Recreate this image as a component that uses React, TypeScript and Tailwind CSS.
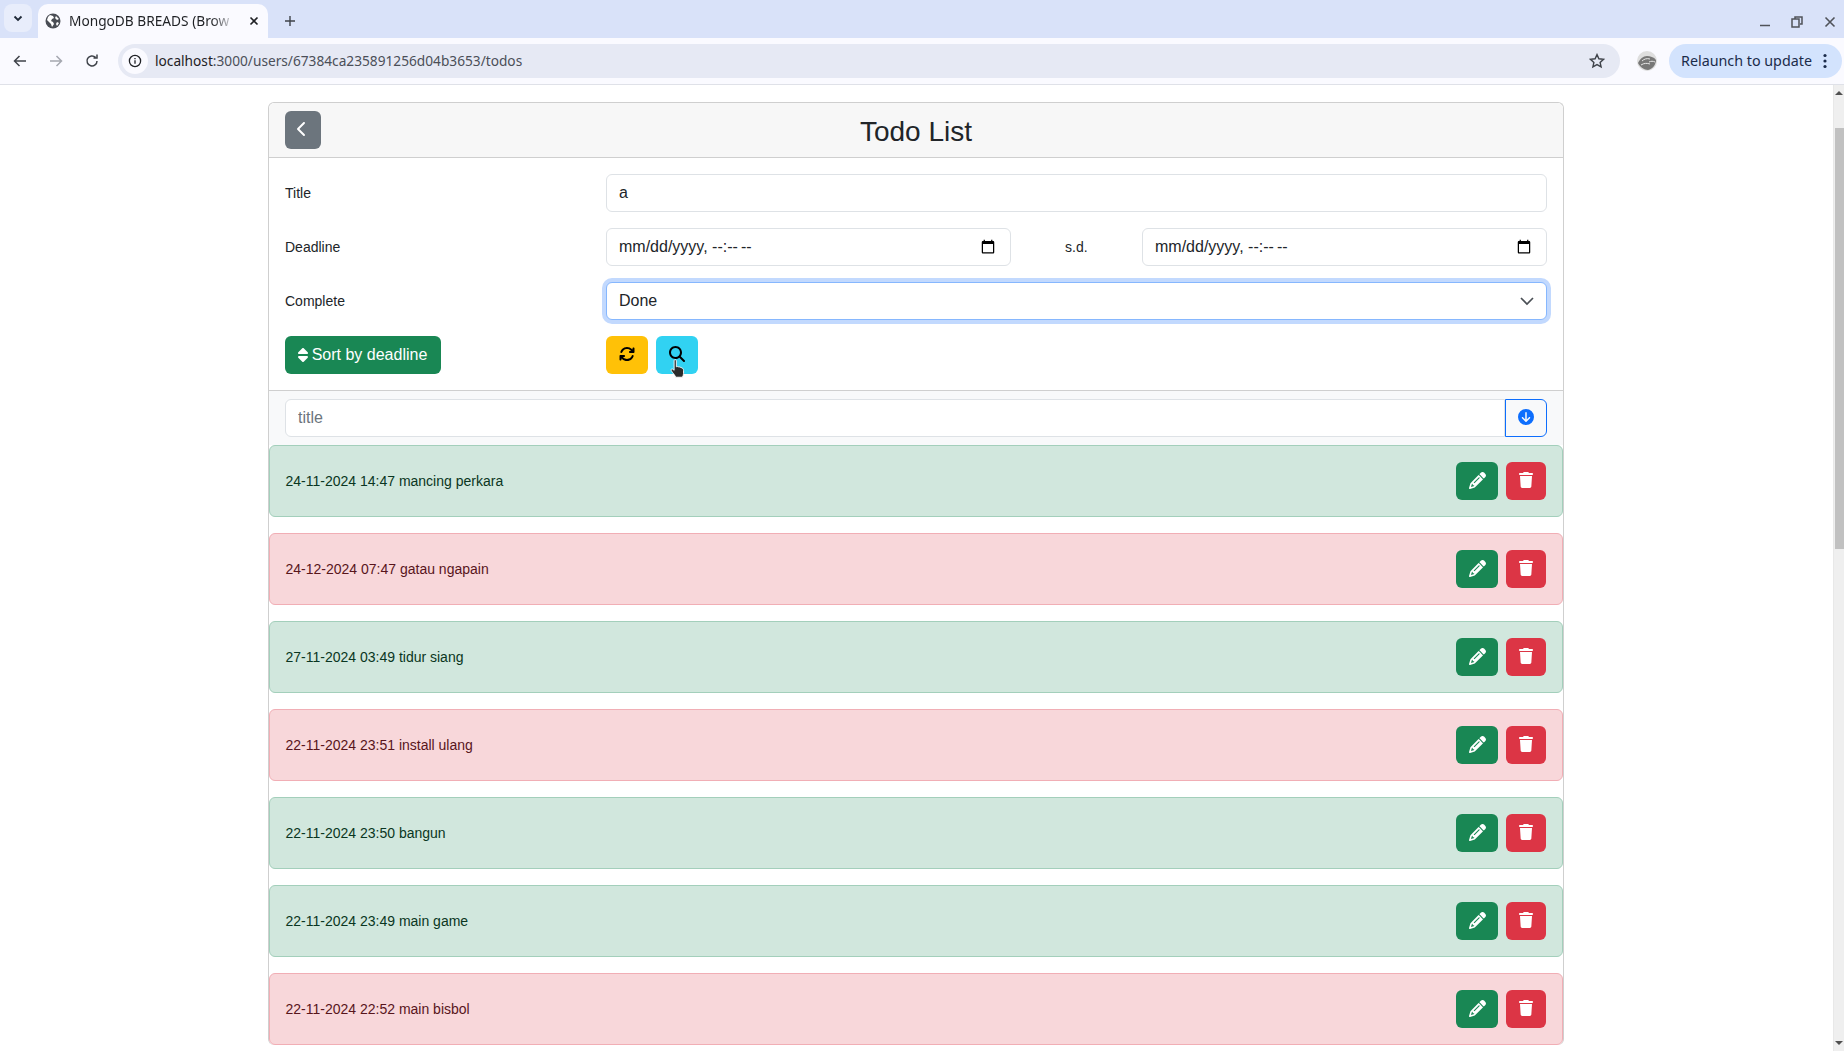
import { FaArrowsRotate, FaChevronLeft, FaCircleArrowDown, FaMagnifyingGlass, FaPencil, FaSort, FaTrash } from "react-icons/fa6";

const todos = [
  { text: "24-11-2024 14:47 mancing perkara", done: true },
  { text: "24-12-2024 07:47 gatau ngapain", done: false },
  { text: "27-11-2024 03:49 tidur siang", done: true },
  { text: "22-11-2024 23:51 install ulang", done: false },
  { text: "22-11-2024 23:50 bangun", done: true },
  { text: "22-11-2024 23:49 main game", done: true },
  { text: "22-11-2024 22:52 main bisbol", done: false },
];

function Favicon() {
  return (
    <svg width="16" height="16" viewBox="0 0 16 16">
      <circle cx="8" cy="8" r="7.5" fill="#4a4d55" />
      <path d="M5 2l3 1 1 2-2 1-1 2 2 1 1 2-2 3-1-3-2-2-2-2 1-3zM11 3l3 3-2 1-2-2zM12 9l2 1-2 3-1-2z" fill="#fff" />
    </svg>
  );
}

function BrowserChrome() {
  return (
    <div className="shrink-0" style={{ fontFamily: "'Noto Sans', sans-serif" }}>
      <div className="flex h-[38px] items-end bg-[#d9e2f9]">
        <div className="ml-[4px] mb-[6px] flex h-[28px] w-[28px] items-center justify-center rounded-lg bg-[#e8edfb]">
          <svg width="12" height="12" viewBox="0 0 12 12" fill="none" stroke="#1f2937" strokeWidth="1.8"><path d="M2.5 4.5 6 8l3.500-3.500" /></svg>
        </div>
        <div className="ml-[6px] flex h-[34px] w-[230px] items-center rounded-t-[10px] bg-[#fafaff] pl-[7px]">
          <Favicon />
          <span className="ml-[8px] w-[170px] overflow-hidden whitespace-nowrap text-[13.7px] text-[#1f2125] [mask-image:linear-gradient(to_right,black_84%,transparent_98%)]">MongoDB BREADS (Brow</span>
          <svg className="ml-[10px]" width="10" height="10" viewBox="0 0 10 10" stroke="#1f2125" strokeWidth="1.6"><path d="M1.5 1.5l7 7M8.500 1.500l-7 7" /></svg>
        </div>
        <svg className="mb-[11px] ml-[16px]" width="12" height="12" viewBox="0 0 12 12" stroke="#3f434a" strokeWidth="1.4"><path d="M6 1v10M1 6h10" /></svg>
        <div className="ml-auto mb-[10px] flex items-center">
          <svg width="12" height="12" viewBox="0 0 12 12" stroke="#50535a" strokeWidth="1.5"><path d="M1 9.500h10" /></svg>
          <svg className="ml-[20px]" width="12" height="12" viewBox="0 0 12 12" fill="none" stroke="#50535a" strokeWidth="1.5"><path d="M4 3V1h7v7H9M1 3h7v8H1z" /></svg>
          <svg className="ml-[21px] mr-[8px]" width="12" height="12" viewBox="0 0 12 12" stroke="#50535a" strokeWidth="1.6"><path d="M1.500 1.500l9 9M10.500 1.500l-9 9" /></svg>
        </div>
      </div>
      <div className="flex h-[47px] items-center border-b border-[#dfe1e8] bg-[#fafaff]">
        <svg className="ml-[12px]" width="16" height="16" viewBox="0 0 16 16" fill="none" stroke="#3f434a" strokeWidth="1.5"><path d="M14 8H2.500M7.500 3l-5 5 5 5" /></svg>
        <svg className="ml-[20px]" width="16" height="16" viewBox="0 0 16 16" fill="none" stroke="#a5a8b0" strokeWidth="1.5"><path d="M2 8h11.500M8.500 3l5 5-5 5" /></svg>
        <svg className="ml-[20px]" width="16" height="16" viewBox="0 0 16 16" fill="none" stroke="#3f434a" strokeWidth="1.5"><path d="M13 8a5 5 0 1 1-1.500-3.600M13 1.500v3.500H9.500" /></svg>
        <div className="ml-[18px] flex h-[34px] w-[1502px] items-center rounded-full bg-[#e6e9f4] pl-[4px]">
          <div className="flex h-[26px] w-[26px] items-center justify-center rounded-full bg-[#fafaff]">
            <svg width="14" height="14" viewBox="0 0 14 14" fill="none" stroke="#1f2125" strokeWidth="1.3"><circle cx="7" cy="7" r="5.600" /><path d="M7 6.200v3.600M7 4v1.200" /></svg>
          </div>
          <span className="ml-[7px] text-[13.7px] text-[#1f2125]">localhost<span className="text-[#4b4f58]">:3000/users/67384ca235891256d04b3653/todos</span></span>
          <svg className="ml-auto mr-[15px]" width="16" height="16" viewBox="0 0 16 16" fill="none" stroke="#3f434a" strokeWidth="1.4"><path d="M8 1.600l1.900 4.200 4.600.5-3.400 3.100 1 4.500L8 11.600l-4.100 2.300 1-4.500-3.400-3.100 4.600-.5z" /></svg>
        </div>
        <svg className="ml-[17px]" width="20" height="20" viewBox="0 0 20 20">
          <circle cx="10" cy="10" r="10" fill="#dedede" />
          <path d="M1 12c2-4 5-7 9-7 3 0 7 1 9 4 0 4-3 9-8 10-4 0-8-3-10-7z" fill="#777" />
          <path d="M5 10c2-2 5-3 8-2M4 14c3-2 6-2 9-1M12 11c2-1 4-1 6 0" stroke="#e6e6e6" fill="none" />
        </svg>
        <div className="ml-[12px] flex h-[34px] w-[173px] items-center rounded-full bg-[#d3e3fd] pl-[12px] text-[14.3px] text-[#1b2b4a]">
          Relaunch to update
          <svg className="ml-[11px]" width="4" height="16" viewBox="0 0 4 16" fill="#1b2b4a"><circle cx="2" cy="2.500" r="1.600" /><circle cx="2" cy="8" r="1.600" /><circle cx="2" cy="13.500" r="1.600" /></svg>
        </div>
      </div>
    </div>
  );
}

function Scrollbar() {
  return (
    <div className="flex w-[11px] shrink-0 flex-col border-l border-[#e8e8e8] bg-[#efefef]">
      <div className="flex h-[43px] shrink-0 justify-center pt-[6px]">
        <div className="h-0 w-0 border-x-[4px] border-b-[4px] border-x-transparent border-b-[#505050]" />
      </div>
      <div className="ml-[1px] h-[421px] shrink-0 bg-[#c1c1c1]" />
      <div className="mt-auto flex justify-center pb-[6px]">
        <div className="h-0 w-0 border-x-[4px] border-t-[4px] border-x-transparent border-t-[#505050]" />
      </div>
    </div>
  );
}

function TodoRow({ text, done }: { text: string; done: boolean }) {
  return (
    <div className={`flex h-[72px] shrink-0 items-center justify-between rounded-[6px] border pl-[15.5px] pr-[16px] text-[14px] ${done ? "border-[#a3cfbb] bg-[#d1e7dd] text-[#0a3622]" : "border-[#f1aeb5] bg-[#f8d7da] text-[#58151c]"}`}>
      <span>{text}</span>
      <div className="flex gap-[8px]">
        <button className="flex h-[38px] w-[42px] items-center justify-center rounded-[6px] bg-[#198754] pb-[2px] text-white"><FaPencil size={17} /></button>
        <button className="flex h-[38px] w-[40px] items-center justify-center rounded-[6px] bg-[#dc3545] pb-[3px] text-white"><FaTrash size={16} /></button>
      </div>
    </div>
  );
}

const inputClass = "h-[38px] rounded-[6px] border border-[#dee2e6] bg-white px-[12px] text-[16px] text-[#212529] outline-none";
// bootstrap strips the padding chrome puts on the date fields
const dateClass = "[&::-webkit-datetime-edit-fields-wrapper]:p-0 [&::-webkit-datetime-edit-text]:p-0 [&::-webkit-datetime-edit-month-field]:p-0 [&::-webkit-datetime-edit-day-field]:p-0 [&::-webkit-datetime-edit-year-field]:p-0 [&::-webkit-datetime-edit-hour-field]:p-0 [&::-webkit-datetime-edit-minute-field]:p-0 [&::-webkit-datetime-edit-ampm-field]:p-0";

export default function App() {
  return (
    <div className="flex h-[1051px] flex-col overflow-hidden bg-white" style={{ fontFamily: "'Liberation Sans', sans-serif" }}>
      <BrowserChrome />
      <div className="flex min-h-0 flex-1">
        <div className="min-w-0 flex-1 overflow-hidden pt-[17px] pl-[268px] pr-[269px]">
          <div className="rounded-[6px] border border-b-0 border-[#cfcfcf] text-[#212529]">
            <div className="relative flex h-[55px] items-center justify-center rounded-t-[6px] border-b border-[#cfcfcf] bg-[#f7f7f7] pt-[4px]">
              <button className="absolute left-[16px] top-[8px] flex h-[38px] w-[36px] items-center justify-center rounded-[6px] bg-[#6c757d] pb-[2px] pr-[2px] text-white"><FaChevronLeft size={16} /></button>
              <h1 className="text-[28px] leading-[34px]">Todo List</h1>
            </div>
            <div className="flex h-[232px] flex-col gap-[16px] px-[16px] pt-[16px]">
              <div className="flex items-center text-[14px]">
                <label className="w-[321px] shrink-0">Title</label>
                <input readOnly value="a" className={`${inputClass} flex-1`} />
              </div>
              <div className="flex items-center text-[14px]">
                <label className="w-[321px] shrink-0">Deadline</label>
                <input type="datetime-local" className={`${inputClass} ${dateClass} w-[405px]`} />
                <span className="ml-[54px] w-[77px]">s.d.</span>
                <input type="datetime-local" className={`${inputClass} ${dateClass} flex-1`} />
              </div>
              <div className="flex items-center text-[14px]">
                <label className="w-[321px] shrink-0">Complete</label>
                <div className="relative flex-1">
                  <select defaultValue="Done" className="h-[38px] w-full appearance-none rounded-[6px] border border-[#86b7fe] bg-white px-[12px] text-[16px] text-[#212529] shadow-[0_0_0_4px_#c2d9fe] outline-none">
                    <option>Done</option>
                  </select>
                  <svg className="absolute right-[12px] top-[11px]" width="16" height="16" viewBox="0 0 16 16" fill="none" stroke="#4a4f55" strokeWidth="1.7"><path d="m2 5 6 6 6-6" /></svg>
                </div>
              </div>
              <div className="flex items-center">
                <div className="w-[321px] shrink-0">
                  <button className="flex h-[38px] w-[156px] items-center justify-center gap-[1px] rounded-[6px] bg-[#198754] pr-[4px] text-[16px] text-white"><FaSort size={16} />Sort by deadline</button>
                </div>
                <div className="flex gap-[8px]">
                  <button className="flex h-[38px] w-[42px] items-center justify-center rounded-[6px] bg-[#ffc107] pb-[2px] text-black"><FaArrowsRotate size={16} /></button>
                  <button className="relative flex h-[38px] w-[42px] items-center justify-center rounded-[6px] bg-[#31d2f2] pb-[2px] text-black">
                    <FaMagnifyingGlass size={16} />
                    <svg className="absolute left-[13px] top-[23px]" width="18" height="20" viewBox="0 0 15 18">
                      <path d="M4 1.500c0-1.200 2-1.200 2 0V7l1-.2 1 .3 1 .1 1 .4 1 .4c1 .5 1.500 1 1.500 2.500v2.500c0 1.500-.7 2.400-1 3.400H5.500c-.5-1.200-1.500-2.400-3-4.400-1-1.300-1.500-2.200-1-2.800.6-.6 1.600 0 2.500 1z" fill="#2b2b2b" stroke="#fff" strokeWidth="0.8" />
                    </svg>
                  </button>
                </div>
              </div>
            </div>
            <div className="flex h-[55px] items-start border-t border-[#cfcfcf] bg-[#f8f9fa] px-[16px] pt-[8px]">
              <input readOnly placeholder="title" className="h-[38px] flex-1 rounded-l-[6px] border border-[#dee2e6] bg-white px-[12px] text-[16px] outline-none placeholder:text-[#6c757d]" />
              <button className="flex h-[38px] w-[42px] items-center justify-center rounded-r-[6px] border border-[#0d6efd] pb-[2px] text-[#0d6efd]"><FaCircleArrowDown size={16} /></button>
            </div>
            <div className="flex flex-col gap-[16px]">
              {todos.map((t) => <TodoRow key={t.text} text={t.text} done={t.done} />)}
            </div>
          </div>
        </div>
        <Scrollbar />
      </div>
    </div>
  );
}
